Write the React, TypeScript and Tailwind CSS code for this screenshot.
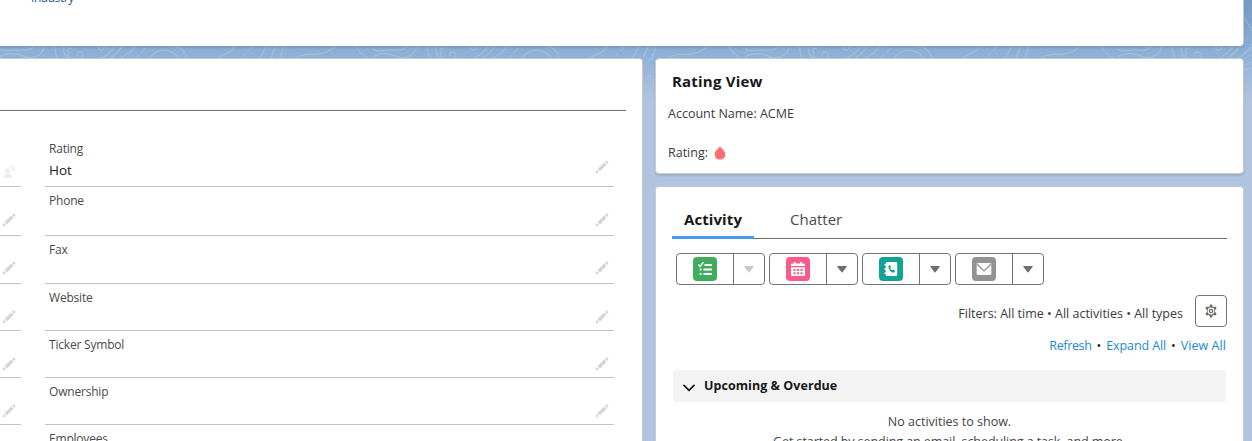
import React from "react";

const FONT = "font-['Open_Sans',sans-serif]";

function Pencil() {
  return (
    <svg width="14" height="14" viewBox="0 0 14 14" fill="#d6d6d6" className="shrink-0">
      <path d="M10 1.700 11.100.7q.5-.5 1.100 0l1 1.100q.5.600 0 1.100L12.200 3.900zM9.300 2.400 11.600 4.700 5 11.500 2.500 9zM1.700 9.800 4.200 12.300 1.300 13.300Q.3 13.600.6 12.700z" />
    </svg>
  );
}

function ChangeOwner() {
  return (
    <svg width="14" height="14" viewBox="0 0 14 14" fill="#ededed" className="shrink-0">
      <circle cx="5.500" cy="5.800" r="2.600" />
      <path d="M1 12.800v-1.500q0-1.500 3.500-2.500h2q3.500 1 3.500 2.500v1.500z" />
      <path d="M7.500 1.300q3.500-.5 4 3M9.800 3.800l1.700 1.800 1.700-1.800" fill="none" stroke="#ededed" strokeWidth="1.300" />
    </svg>
  );
}

function Contours() {
  return (
    <svg className="absolute left-0 top-0" width="1252" height="110" fill="none" stroke="#b3cbe6" strokeOpacity="0.6" strokeWidth="1">
      <defs>
        <pattern id="contours" width="372.500" height="110" patternUnits="userSpaceOnUse">
          <path d="M0 49C5 53 10 50 16 50S30 52 34 46M44 45C44 55 36 58 25 58M0 57C8 52 18 53 28 58M55 45Q54 53 58 60M64 45Q62 54 69 60M72 48q-6 0-3 5q-3 3 2 5M78 57a3 3 0 1 1 5-2l-1 5M98 45q0 6 4 5q3-1 2-5M116 45Q110 56 97 60M123 45Q118 54 107 60M136 45Q130 54 118 59M146 48l-5 5M139 55l-4 4M148 60C157 45 176 49 179 60M162 45C178 44 186 50 187 60M234 45Q235 50 227 53T218 59M252 47l-4 4M246 53l-3 3M267 45Q263 54 258 60M276 45l-5 13M284 45Q282 53 279 60M296 58C303 53 310 55 318 54S332 50 336 45M356 45Q358 53 370 59" />
        </pattern>
      </defs>
      <rect width="1252" height="62" fill="url(#contours)" stroke="none" />
      <path d="M1244 17C1252 30 1258 39 1248 49L1244 53M1244 59L1252 54M1244 65L1252 62M1244 70L1252 68M644 66q5-4 9-12M646 77l5-1M648 90l4-2" />
    </svg>
  );
}

type Row = { label: string; value?: string; height: string; pencil: string };

function Field({ label, value, height, pencil }: Row) {
  return (
    <div className={`${height} flex shrink-0 items-end border-b border-[#c3c3c3] pl-1`}>
      <div className="flex h-full flex-1 flex-col pt-[5px] text-[12px] leading-[18px] text-[#4a4a4a]">
        <span className="tracking-[-0.2px]">{label}</span>
        {value && <span className="pt-px text-[13.500px] leading-[22px] text-[#222]">{value}</span>}
      </div>
      <div className={`${pencil} pr-[5px]`}>
        <Pencil />
      </div>
    </div>
  );
}

const rows: Row[] = [
  { label: "Rating", value: "Hot", height: "h-[52px]", pencil: "pb-[12px]" },
  { label: "Phone", height: "h-[49px]", pencil: "pb-[8px]" },
  { label: "Fax", height: "h-[48px]", pencil: "pb-[8px]" },
  { label: "Website", height: "h-[47px]", pencil: "pb-[6px]" },
  { label: "Ticker Symbol", height: "h-[47px]", pencil: "pb-[6px]" },
  { label: "Ownership", height: "h-[47px]", pencil: "pb-[6px]" },
  { label: "Employees", height: "h-[47px]", pencil: "pb-[6px]" },
];

function TaskIcon() {
  return (
    <svg width="24" height="24" viewBox="0 0 24 24" className="rounded-[4px] bg-[#41ab5e]" fill="none" stroke="#fff">
      <path d="M11.500 8H19M10.500 12.500H19M10.500 17H19" strokeWidth="2" />
      <path d="M5.300 7.500 7.100 9.300 10.500 5.300" strokeWidth="1.400" />
      <path d="M6.700 12.500h1.800M6.700 17h1.800" strokeWidth="2" />
    </svg>
  );
}

function EventIcon() {
  return (
    <svg width="24" height="24" viewBox="0 0 24 24" className="rounded-[4px] bg-[#fb5b88]" fill="#fff">
      <path d="M8 5h1.700v1.500h4.600V5H16v1.500h1.500q1.500 0 1.500 1.400V9H5V7.900q0-1.400 1.500-1.400H8zM5 10.200h14v7.300q0 1.500-1.500 1.500h-11Q5 19 5 17.500z" />
      <path d="M7.500 12h2v2h-2zm3.500 0h2v2h-2zm3.500 0h2v2h-2zm-7 3.300h2v2h-2zm3.500 0h2v2h-2zm3.500 0h2v2h-2z" fill="#fb5b88" />
    </svg>
  );
}

function CallIcon() {
  return (
    <svg width="24" height="24" viewBox="0 0 24 24" className="rounded-[4px] bg-[#14a297]" fill="#fff">
      <path d="M8 5h9q1.200 0 1.200 1.200v11.600Q18.200 19 17 19H8q-1.300 0-1.300-1.500V17H5.500v-1.500h1.200v-2.700H5.500v-1.500h1.200V8.600H5.500V7.100h1.200v-.6Q6.700 5 8 5z" />
      <path d="M9.300 9.100 10.700 8l1.300 2.100-.9 1.100q.7 1.500 2.100 2.100l1.200-.8 1.800 1.300-1 1.600q-1 .6-3.300-.7-2.800-2.200-2.600-5.600z" fill="#14a297" />
    </svg>
  );
}

function EmailIcon() {
  return (
    <svg width="24" height="24" viewBox="0 0 24 24" className="rounded-[4px] bg-[#959192]" fill="#fff">
      <rect x="4.700" y="6" width="14.600" height="12" rx="1.200" />
      <path d="M5 7.200 12 13.900 19 7.200" fill="none" stroke="#959192" strokeWidth="1.300" />
    </svg>
  );
}

function Action({ icon, muted }: { icon: React.ReactNode; muted?: boolean }) {
  return (
    <div className="flex h-8 w-[89px] rounded-[4px] border border-[#747474]">
      <div className="flex w-[57px] items-center justify-center border-r border-[#747474]">{icon}</div>
      <div className="flex flex-1 items-center justify-center pt-px">
        <svg width="10" height="7" viewBox="0 0 10 7" className={muted ? "fill-[#c9c9c9]" : "fill-[#706e6b]"}>
          <path d="M.6 0h8.800q.7.2.3.8L5.500 6.300q-.5.500-1 0L.3.800Q-.1.200.6 0z" />
        </svg>
      </div>
    </div>
  );
}

export default function App() {
  return (
    <div className={`${FONT} relative h-[441px] w-[1252px] overflow-hidden bg-[linear-gradient(#7398c2_0px,#8baed5_50px,#b0c4df_100px)]`}>
      <Contours />
      <div className="relative flex h-[441px] flex-col gap-3">
        <header className="h-[46px] w-[1244px] shrink-0 overflow-hidden rounded-br-[4px] border-r border-[#c9c9c9] bg-white pl-[31px] shadow-[0_2px_2px_rgba(0,0,0,0.1)]">
          <div className="-mt-[11px] text-[12px] leading-[18px] tracking-[-0.45px] text-[#1f5b91]">Industry</div>
        </header>
        <main className="flex min-h-0 flex-1 gap-3">
          <section className="w-[643px] overflow-hidden rounded-tr-[4px] border-r border-t border-[#c9c9c9] bg-white">
            <div className="mr-4 h-[52px] border-b border-[#706e6b]" />
            <div className="flex gap-6 pt-6">
              <div className="w-[21px]">
                {rows.map((r, i) => (
                  <div key={r.label} className={`${r.height} flex items-end border-b border-[#c3c3c3] pl-[2px] ${i ? r.pencil : "pb-[7px]"}`}>
                    {i ? <Pencil /> : <ChangeOwner />}
                  </div>
                ))}
              </div>
              <div className="w-[569px]">
                {rows.map((r) => <Field key={r.label} {...r} />)}
              </div>
            </div>
          </section>

          <div className="flex w-[589px] flex-col gap-3">
            <section className="h-[116px] shrink-0 rounded-[4px] border border-[#c9c9c9] bg-white shadow-[0_2px_2px_rgba(0,0,0,0.1)]">
              <h2 className="pl-4 pt-[10px] text-[15px] font-bold leading-6 tracking-[0.2px] text-[#181818]">Rating View</h2>
              <p className="pl-3 pt-[11px] text-[12.500px] leading-5 text-[#3a3a3a]">Account Name: ACME</p>
              <div className="flex items-center pl-3 pt-[19px] text-[12.500px] leading-5 text-[#3a3a3a]">
                Rating:
                <svg width="12" height="14" viewBox="0 0 12 14" className="ml-[6px]" fill="#ff6d75">
                  <path d="M6 .3C6.800 2.400 11.300 4.500 11.300 8.200 11.300 11.500 9 13.500 6 13.500S.7 11.500.7 8.200C.7 4.500 5.200 2.400 6 .3z" />
                </svg>
              </div>
            </section>

            <section className="min-h-0 flex-1 overflow-hidden rounded-t-[4px] border border-b-0 border-[#c9c9c9] bg-white px-4">
              <nav className="flex h-[52px] border-b border-[#706e6b] pt-[12px] leading-10">
                <div className="-mb-px w-[82px] border-b-[3px] border-[#4a9be8] text-center text-[15px] font-bold tracking-[0.1px] text-[#181818]">Activity</div>
                <div className="pl-9 text-[15px] text-[#4a4a4a]">Chatter</div>
              </nav>
              <div className="flex gap-1 pl-1 pt-[14px]">
                <Action icon={<TaskIcon />} muted />
                <Action icon={<EventIcon />} />
                <Action icon={<CallIcon />} />
                <Action icon={<EmailIcon />} />
              </div>
              <div className="flex items-center justify-end gap-3 pt-[10px] text-[12.500px] text-[#3a3a3a]">
                <span className="pt-[6px]">Filters: All time • All activities • All types</span>
                <button className="flex size-8 items-center justify-center rounded-[4px] border border-[#747474]">
                  <svg width="14" height="14" viewBox="0 0 14 14" fill="#706e6b">
                    <path fillRule="evenodd" d="M6 .5h2l.6 2 .9.500 2.100-.5 1 1.800L11.100 5.900v2.200l1.500 1.600-1 1.800-2.100-.5-.9.500-.6 2H6l-.6-2-.9-.5-2.100.5-1-1.800L2.900 8.100V5.900L1.400 4.300l1-1.800 2.100.5.9-.5zM7 3.600a3.400 3.400 0 1 0 0 6.800 3.400 3.400 0 1 0 0-6.800zM7 4.700a2.300 2.300 0 1 1 0 4.600 2.300 2.300 0 1 1 0-4.600zM7 6a1 1 0 1 0 0 2 1 1 0 1 0 0-2z" />
                  </svg>
                </button>
              </div>
              <div className="flex justify-end gap-[5px] pr-px pt-[9px] text-[12.500px] leading-5 text-[#181818]">
                <span className="tracking-[-0.35px] text-[#2588cf]">Refresh</span>•
                <span className="tracking-[-0.1px] text-[#2588cf]">Expand All</span>•
                <span className="tracking-[0.05px] text-[#2588cf]">View All</span>
              </div>
              <div className="ml-px mr-px mt-[14px] flex h-8 items-center rounded-[4px] bg-[#f3f3f3] pl-[10px] pr-2 text-[12.500px] font-bold text-[#181818]">
                <svg width="12" height="8" viewBox="0 0 12 8" fill="none" stroke="#181818" strokeWidth="1.700" strokeLinecap="round" strokeLinejoin="round" className="mt-1">
                  <path d="M1 1.300 6 6.300 11 1.300" />
                </svg>
                <span className="pl-[9px] pt-px tracking-[0.05px]">Upcoming &amp; Overdue</span>
              </div>
              <div className="pt-[10px] text-center text-[12.500px] leading-5 text-[#444]">
                <p>No activities to show.</p>
                <p className="tracking-[-0.08px]">Get started by sending an email, scheduling a task, and more.</p>
              </div>
            </section>
          </div>
        </main>
      </div>
    </div>
  );
}
